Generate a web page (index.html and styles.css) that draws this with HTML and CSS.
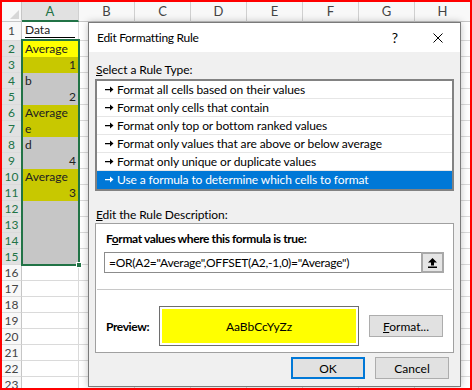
FILE: index.html
```html
<!DOCTYPE html>
<html lang="en">
<head>
    <meta charset="UTF-8">
    <meta name="viewport" content="width=device-width, initial-scale=1.0">
    <title>Edit Formatting Rule</title>
    <link rel="stylesheet" href="styles.css">
</head>
<body>
    <div class="frame">
        <div class="sheet">
            <div class="rowheads">
                <div class="corner"><span class="tri"></span></div>
                <div class="rh first">1</div>
                <div class="rh on">2</div>
                <div class="rh on">3</div>
                <div class="rh on">4</div>
                <div class="rh on">5</div>
                <div class="rh on">6</div>
                <div class="rh on">7</div>
                <div class="rh on">8</div>
                <div class="rh on">9</div>
                <div class="rh on">10</div>
                <div class="rh on">11</div>
                <div class="rh on">12</div>
                <div class="rh on">13</div>
                <div class="rh on">14</div>
                <div class="rh on">15</div>
                <div class="rh">16</div>
                <div class="rh">17</div>
                <div class="rh">18</div>
                <div class="rh">19</div>
                <div class="rh">20</div>
                <div class="rh">21</div>
                <div class="rh">22</div>
                <div class="rh">23</div>
            </div>

            <div class="col-a">
                <div class="ch on">A</div>
                <div class="cell first"><span class="head">Data</span></div>
                <div class="sel">
                    <div class="cell hi">Average</div>
                    <div class="cell olive num">1</div>
                    <div class="cell grey">b</div>
                    <div class="cell grey num">2</div>
                    <div class="cell olive">Average</div>
                    <div class="cell olive">e</div>
                    <div class="cell grey">d</div>
                    <div class="cell grey num">4</div>
                    <div class="cell olive">Average</div>
                    <div class="cell olive num">3</div>
                    <div class="cell grey"></div>
                    <div class="cell grey"></div>
                    <div class="cell grey"></div>
                    <div class="cell grey"></div>
                    <span class="handle"></span>
                </div>
                <div class="cell"></div>
                <div class="cell"></div>
                <div class="cell"></div>
                <div class="cell"></div>
                <div class="cell"></div>
                <div class="cell"></div>
                <div class="cell"></div>
                <div class="cell"></div>
            </div>

            <div class="rest">
                <div class="heads">
                    <div class="ch">B</div>
                    <div class="ch">C</div>
                    <div class="ch">D</div>
                    <div class="ch">E</div>
                    <div class="ch">F</div>
                    <div class="ch">G</div>
                    <div class="ch">H</div>
                </div>
                <div class="row1"></div>
                <div class="grid"></div>
            </div>
        </div>

        <div class="dialog">
            <div class="titlebar">
                <span class="title">Edit Formatting Rule</span>
                <span class="help">?</span>
                <svg class="close" viewBox="0 0 10 10" width="10" height="10"><path d="M0.5 0.5l9 9M9.5 0.5l-9 9" stroke="#000" fill="none"/></svg>
            </div>
            <div class="body">
                <div class="label"><u>S</u>elect a Rule Type:</div>
                <ul class="rules">
                    <li><svg class="arrow" viewBox="0 0 9 7" width="9" height="7"><path d="M0 3h6v1.2H0z M5 0.5L8.5 3.6L5 6.6z"/></svg>Format all cells based on their values</li>
                    <li><svg class="arrow" viewBox="0 0 9 7" width="9" height="7"><path d="M0 3h6v1.2H0z M5 0.5L8.5 3.6L5 6.6z"/></svg>Format only cells that contain</li>
                    <li><svg class="arrow" viewBox="0 0 9 7" width="9" height="7"><path d="M0 3h6v1.2H0z M5 0.5L8.5 3.6L5 6.6z"/></svg>Format only top or bottom ranked values</li>
                    <li><svg class="arrow" viewBox="0 0 9 7" width="9" height="7"><path d="M0 3h6v1.2H0z M5 0.5L8.5 3.6L5 6.6z"/></svg>Format only values that are above or below average</li>
                    <li><svg class="arrow" viewBox="0 0 9 7" width="9" height="7"><path d="M0 3h6v1.2H0z M5 0.5L8.5 3.6L5 6.6z"/></svg>Format only unique or duplicate values</li>
                    <li class="selected"><svg class="arrow" viewBox="0 0 9 7" width="9" height="7"><path d="M0 3h6v1.2H0z M5 0.5L8.5 3.6L5 6.6z"/></svg>Use a formula to determine which cells to format</li>
                </ul>

                <div class="label second"><u>E</u>dit the Rule Description:</div>
                <div class="desc">
                    <div class="desc-top">
                        <div class="desc-label">F<u>o</u>rmat values where this formula is true:</div>
                        <div class="formula">
                            <span class="formula-text">=OR(A2="Average",OFFSET(A2,-1,0)="Average")</span>
                            <span class="pick"><svg viewBox="0 0 9 10" width="9" height="10"><path d="M4.5 0L9 4.5H6V7.5H3V4.5H0z M0 8.5h9V10H0z"/></svg></span>
                        </div>
                    </div>
                    <div class="desc-bottom">
                        <span class="pv-label">Preview:</span>
                        <div class="preview"><div class="swatch">AaBbCcYyZz</div></div>
                        <button class="btn fmt"><u>F</u>ormat...</button>
                    </div>
                </div>

                <div class="actions">
                    <button class="btn default">OK</button>
                    <button class="btn">Cancel</button>
                </div>
            </div>
        </div>
    </div>
</body>
</html>
```

FILE: styles.css
```css
* {
    box-sizing: border-box;
}
body {
    margin: 0;
    background: #fff;
}
.frame {
    position: relative;
    width: 472px;
    height: 390px;
    border: 2px solid #f00;
    overflow: hidden;
    font-family: Lato, "Liberation Sans", sans-serif;
}

/* spreadsheet */
.sheet {
    display: flex;
    height: 100%;
}
.rowheads {
    width: 20px;
    flex: none;
}
.corner {
    height: 20px;
    background: #f8f8f8;
    border-right: 1px solid #c6c6c6;
    border-bottom: 1px solid #c6c6c6;
    display: flex;
    justify-content: flex-end;
    align-items: flex-end;
    padding: 0 2px 2px 0;
}
.tri {
    width: 0;
    height: 0;
    border-left: 9px solid transparent;
    border-bottom: 9px solid #d6d6d6;
}
.rh {
    height: 16px;
    background: #f8f8f8;
    border-right: 1px solid #c6c6c6;
    border-bottom: 1px solid #dadada;
    color: #444;
    font-size: 12px;
    line-height: 15px;
    text-align: center;
}
.rh.first {
    height: 19px;
    line-height: 18px;
}
.rh.on {
    background: #e1e1e1;
    color: #217346;
}
.col-a {
    width: 57px;
    flex: none;
}
.ch {
    height: 20px;
    background: #f8f8f8;
    border-right: 1px solid #d0d0d0;
    border-bottom: 1px solid #c6c6c6;
    color: #444;
    font-size: 13px;
    line-height: 19px;
    text-align: center;
}
.ch.on {
    background: #e1e1e1;
    color: #217346;
    border-bottom: 2px solid #217346;
    line-height: 18px;
}
.cell {
    height: 16px;
    border-right: 1px solid #dadada;
    border-bottom: 1px solid #dadada;
    padding: 0 3px;
    color: #222;
    font-size: 12px;
    line-height: 15px;
    white-space: nowrap;
}
.cell.first {
    height: 19px;
}
.head {
    display: block;
    height: 16px;
    border-bottom: 1px solid #000;
}
.sel {
    position: relative;
}
.sel .cell {
    border: none;
    line-height: 16px;
}
.sel::after {
    content: "";
    position: absolute;
    top: -2px;
    left: -1px;
    right: -1px;
    bottom: -1px;
    border: 2px solid #217346;
}
.handle {
    position: absolute;
    right: -3px;
    bottom: -3px;
    width: 6px;
    height: 6px;
    background: #217346;
    border: 1px solid #fff;
    z-index: 1;
}
.hi {
    background: #ffff00;
}
.olive {
    background: #c8c800;
}
.grey {
    background: #c6c6c6;
}
.num {
    text-align: right;
}
.rest {
    flex: 1;
}
.heads {
    display: flex;
}
.heads .ch {
    width: 56px;
    flex: none;
}
.row1 {
    height: 19px;
    background: linear-gradient(to right, transparent 55px, #dadada 55px) 0 0 / 56px 100%;
    border-bottom: 1px solid #dadada;
}
.grid {
    height: 360px;
    background-image:
        linear-gradient(to right, transparent 55px, #dadada 55px),
        linear-gradient(to bottom, transparent 15px, #dadada 15px);
    background-size: 56px 16px;
}

/* dialog */
.dialog {
    position: absolute;
    left: 86px;
    top: 20px;
    width: 373px;
    height: 365px;
    display: flex;
    flex-direction: column;
    background: #f0f0f0;
    border: 1px solid #7a7a7a;
    box-shadow: 0 0 7px rgba(0,0,0,0.25);
    color: #000;
    font-family: Lato, "Noto Sans", sans-serif;
    font-size: 12px;
    letter-spacing: -0.1px;
}
.titlebar {
    height: 29px;
    flex: none;
    display: flex;
    align-items: center;
    padding-left: 8px;
    background: #fff;
}
.title {
    letter-spacing: -0.3px;
}
.help {
    margin-left: auto;
    margin-right: 35px;
    font-size: 14px;
}
.close {
    margin-right: 17px;
}
.body {
    flex: 1;
    display: flex;
    flex-direction: column;
    padding: 10px 6px 7px;
}
.label {
    line-height: 16px;
    padding-left: 1px;
}
.label.second {
    margin-top: 16px;
}
.rules {
    list-style: none;
    margin: 1px 0 0;
    padding: 0;
    background: #fff;
    border: 2px solid #828282;
}
.rules li {
    height: 18px;
    display: flex;
    align-items: center;
    gap: 3px;
    padding-left: 8px;
    border-bottom: 1px solid #e6e6e6;
    white-space: nowrap;
    overflow: hidden;
}
.rules li.selected {
    background: #0078d7;
    border-bottom-color: #0078d7;
    color: #fff;
}
.arrow {
    flex: none;
    fill: currentColor;
}
.desc {
    height: 130px;
    background: #fff;
    border: 1px solid #a0a0a0;
}
.desc-top {
    padding: 7px 9px 16px 8px;
}
.desc-label {
    font-weight: bold;
    line-height: 16px;
    padding-left: 2px;
    letter-spacing: -0.4px;
}
.formula {
    display: flex;
    height: 21px;
    margin-top: 5px;
    border: 1px solid #8c8c8c;
}
.formula-text {
    flex: 1;
    padding-left: 4px;
    line-height: 19px;
    white-space: nowrap;
    letter-spacing: -0.25px;
}
.pick {
    width: 23px;
    margin: -1px -1px -1px 0;
    display: flex;
    align-items: center;
    justify-content: center;
    background: #e5e5e5;
    border: 2px solid #a8a8a8;
}
.desc-bottom {
    display: flex;
    align-items: center;
    margin: 0 1px;
    padding: 16px 9px 0;
    border-top: 1px solid #c8c8c8;
}
.pv-label {
    width: 53px;
    flex: none;
    font-weight: bold;
    letter-spacing: -0.4px;
}
.preview {
    width: 200px;
    height: 40px;
    flex: none;
    padding: 2px;
    border: 1px solid #6e6e6e;
}
.swatch {
    height: 100%;
    display: flex;
    align-items: center;
    justify-content: center;
    background: #ffff00;
    font-size: 12px;
    letter-spacing: 0;
}
.btn {
    width: 74px;
    height: 22px;
    padding: 0;
    background: #e1e1e1;
    border: 1px solid #adadad;
    color: #000;
    font: inherit;
}
.fmt {
    margin-left: 10px;
}
.actions {
    display: flex;
    justify-content: flex-end;
    gap: 10px;
    margin-top: 4px;
    padding-right: 5px;
}
.btn.default {
    border: 2px solid #0078d7;
}
```
